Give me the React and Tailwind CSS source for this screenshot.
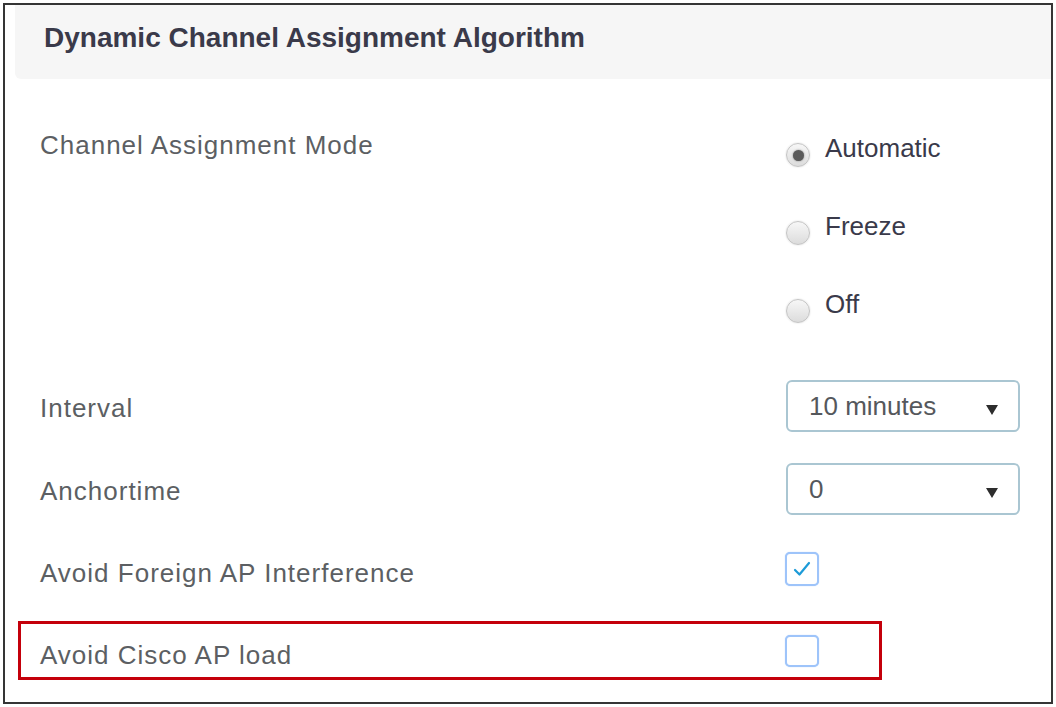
import React from 'react';

const labelFont = { fontFamily: '"Liberation Sans", Arial, sans-serif' };

function Radio({ checked }) {
    return (
        <div className="mt-[10px] w-[24px] h-[24px] rounded-full border border-[#c4c4c4] bg-gradient-to-b from-[#f7f7f7] to-[#dcdcdc] flex items-center justify-center shadow-[0_0_2px_rgba(0,0,0,0.15)] shrink-0">
            {checked && <div className="w-[11px] h-[11px] rounded-full bg-[#5a5a5a] shadow-[0_0_2px_#777]" />}
        </div>
    );
}

function Select({ value }) {
    return (
        <div className="w-[234px] h-[52px] border-2 border-[#aac6d2] rounded-[6px] flex items-center justify-between pl-[21px] pr-[20px] bg-white">
            <span className="text-[26px] leading-[30px] text-[#55585c]">{value}</span>
            <svg width="12" height="10" viewBox="0 0 12 10" className="mt-[8px]">
                <path d="M0 0 L12 0 L6 10 Z" fill="#2d2d2d" />
            </svg>
        </div>
    );
}

function Checkbox({ checked, h = 'h-[34px]' }) {
    return (
        <div className={`w-[34px] ${h} rounded-[5px] border-2 border-[#9ec4fa] shadow-[0_0_1px_#9ec4fa] flex items-center justify-center bg-white`}>
            {checked && (
                <svg width="30" height="30" viewBox="0 0 30 30">
                    <polyline points="8,16 12.5,20.5 22,9" fill="none" stroke="#1d9bd8" strokeWidth="2.2" strokeLinecap="round" strokeLinejoin="round" />
                </svg>
            )}
        </div>
    );
}

const labelCls = 'text-[26px] leading-[30px] tracking-[1px] text-[#5c5f63]';

export default function App() {
    return (
        <div className="w-[1056px] h-[707px] bg-white pt-[3px] pl-[3px]" style={labelFont}>
            <div className="w-[1050px] h-[701px] border-2 border-[#353535] flex flex-col">
                {/* Header */}
                <div className="ml-[10px] h-[74px] bg-[#f6f6f6] rounded-bl-[6px] pl-[29px] pt-[17px]">
                    <h1 className="text-[28px] leading-[32px] font-bold text-[#3a3a4a]">Dynamic Channel Assignment Algorithm</h1>
                </div>

                {/* Form */}
                <div className="pl-[35px] flex flex-col">
                    <div className="mt-[51px] flex">
                        <div className={`w-[746px] ${labelCls}`}>Channel Assignment Mode</div>
                        <div className="mt-[3px] flex flex-col">
                            {[['Automatic', true], ['Freeze', false], ['Off', false]].map(([t, c], i) => (
                                <div key={t} className={`flex items-start gap-[15px] ${i < 2 ? 'h-[78px]' : 'h-[34px]'}`}>
                                    <Radio checked={c} />
                                    <span className="text-[26px] leading-[30px] text-[#3a3a4a]">{t}</span>
                                </div>
                            ))}
                        </div>
                    </div>

                    <div className="mt-[57px] flex items-center h-[52px]">
                        <div className={`w-[746px] pt-[4px] ${labelCls}`}>Interval</div>
                        <Select value="10 minutes" />
                    </div>

                    <div className="mt-[31px] flex items-center h-[52px]">
                        <div className={`w-[746px] pt-[4px] ${labelCls}`}>Anchortime</div>
                        <Select value="0" />
                    </div>

                    <div className="mt-[37px] flex items-center h-[34px]">
                        <div className={`w-[745px] pt-[8px] ${labelCls}`}>Avoid Foreign AP Interference</div>
                        <Checkbox checked />
                    </div>

                    <div className="mt-[35px] -ml-[22px] w-[864px] h-[59px] border-[3px] border-[#c4000b] flex items-center pl-[19px]">
                        <div className={`w-[745px] pt-[9px] ${labelCls}`}>Avoid Cisco AP load</div>
                        <Checkbox h="h-[32px]" />
                    </div>
                </div>
            </div>
        </div>
    );
}
